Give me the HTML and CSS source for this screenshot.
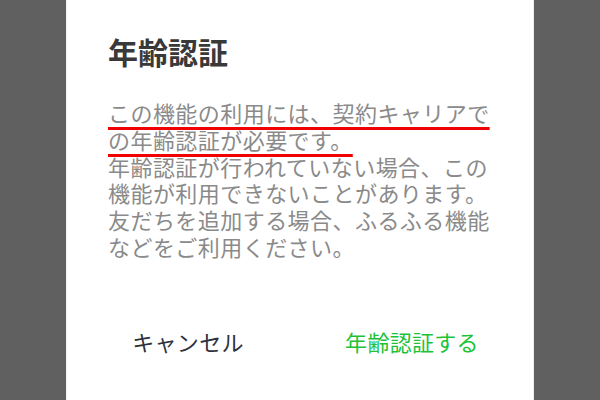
FILE: index.html
```html
<!DOCTYPE html>
<html lang="ja">
<head>
<meta charset="utf-8">
<link rel="stylesheet" href="styles.css">
</head>
<body>
<div class="dialog">
  <h1 class="title">年齢認証</h1>
  <p class="message"><span class="mark mark-1">この機能の利用には、契約キャリアで</span><br><span class="mark mark-2">の年齢認証が必要です。</span><br>年齢認証が行われていない場合、この<br>機能が利用できないことがあります。<br>友だちを追加する場合、ふるふる機能<br>などをご利用ください。</p>
  <div class="actions">
    <div class="btn btn-cancel">キャンセル</div>
    <div class="btn btn-ok">年齢認証する</div>
  </div>
</div>
</body>
</html>
```

FILE: styles.css
```css
html, body {
  margin: 0;
  padding: 0;
  height: 100%;
}
body {
  background: #606060;
  font-family: "Noto Sans CJK JP", "Noto Sans", sans-serif;
}
.dialog {
  width: 468px;
  height: 400px;
  margin-left: 66px;
  background: #ffffff;
  box-sizing: border-box;
  padding: 33px 0 0 42px;
  box-shadow: inset 4px 0 0 -3px #f2f2f2, inset -5px 0 0 -4px #eeeeee;
}
.title {
  margin: 0;
  font-size: 30px;
  line-height: 36px;
  font-weight: 700;
  color: #393939;
}
.message {
  margin: 30px 0 0 0;
  font-size: 22px;
  line-height: 26.8px;
  color: #8a8a8a;
  letter-spacing: 0.45px;
}
.mark {
  text-decoration: underline;
  text-decoration-color: #f00000;
  text-decoration-thickness: 3px;
  text-underline-offset: 5px;
}
.actions {
  display: flex;
  margin: 66px 0 0 -32px;
  width: 448px;
}
.btn {
  flex: 1;
  text-align: center;
  font-size: 22px;
  line-height: 30px;
  letter-spacing: 0.3px;
}
.btn-cancel {
  color: #2e3240;
}
.btn-ok {
  color: #1ec238;
}
```
